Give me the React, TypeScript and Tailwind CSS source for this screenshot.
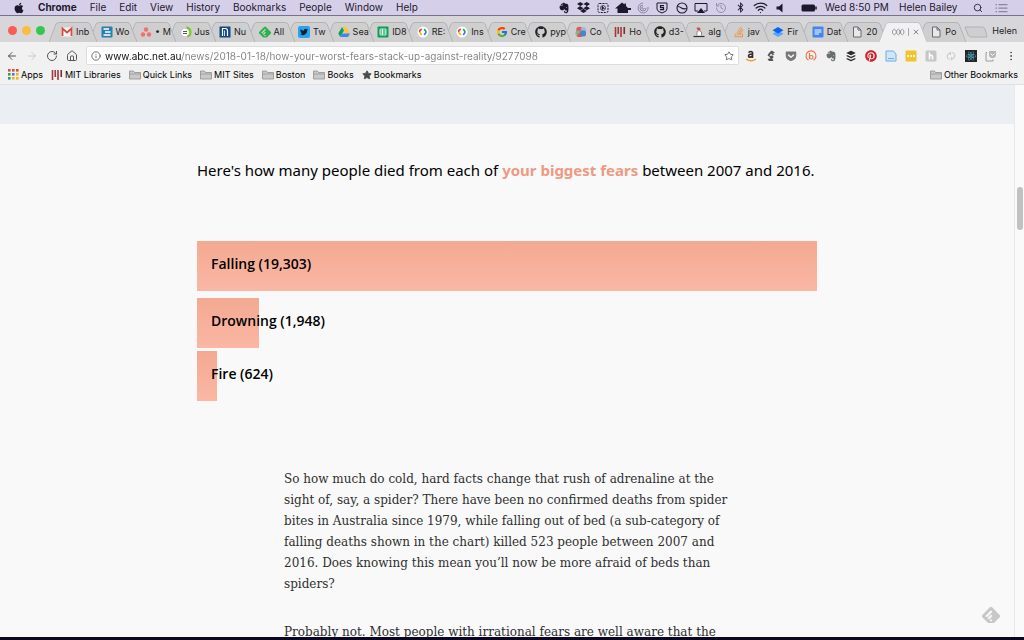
import type { ReactNode } from "react";
import {
  FaAmazon,
  FaApple,
  FaBluetoothB,
  FaBuffer,
  FaDropbox,
  FaEvernote,
  FaGetPocket,
  FaGithub,
  FaPinterest,
  FaReact,
  FaStackOverflow,
  FaTwitter,
} from "react-icons/fa";
import { FcGoogle } from "react-icons/fc";
import { SiFeedly } from "react-icons/si";
import { ArrowLeft, ArrowRight, EllipsisVertical, History, House, Info, RotateCw, Search, Star, Wifi, X } from "lucide-react";

const icon = "size-3 shrink-0";

function Gmail() {
  return (
    <svg viewBox="0 0 24 24" className={icon} aria-hidden="true">
      <rect x="1" y="3" width="22" height="18" rx="2" fill="#f5f5f5" />
      <path d="M3 20V5l9 8 9-8v15" fill="none" stroke="#d54b3d" strokeWidth="3.6" />
    </svg>
  );
}

function Sheet({ box, lines }: { box: string; lines: "grid" | "text" | "tree" }) {
  return (
    <svg viewBox="0 0 24 24" className={icon} aria-hidden="true">
      <rect x="1" y="1" width="22" height="22" rx="2" fill={box} />
      {lines === "grid" && <path d="M6 6h12v12H6zM6 10h12M6 14h12M11 6v12" fill="none" stroke="#fff" strokeWidth="1.6" />}
      {lines === "text" && <path d="M5 8h14M5 12h14M5 16h9" stroke="#fff" strokeWidth="2" />}
      {lines === "tree" && <path d="M5 6h11M8 12h11M5 18h14" stroke="#fff" strokeWidth="2.6" />}
    </svg>
  );
}

function Dots() {
  return (
    <svg viewBox="0 0 24 24" className={icon} aria-hidden="true">
      <g fill="#f2706b">
        <circle cx="12" cy="7" r="4.4" />
        <circle cx="6" cy="17" r="4.4" />
        <circle cx="18" cy="17" r="4.4" />
      </g>
    </svg>
  );
}

function GreenRing() {
  return (
    <svg viewBox="0 0 24 24" className={icon} aria-hidden="true">
      <circle cx="10" cy="13" r="8.5" fill="#fff" stroke="#aaa" strokeWidth="1" />
      <path d="M13 2.5a10 10 0 0 1 2 19" fill="none" stroke="#7ec51d" strokeWidth="4" />
      <path d="M6 11h8M6 15h8" stroke="#555" strokeWidth="2" />
    </svg>
  );
}

function BlueArch() {
  return (
    <svg viewBox="0 0 24 24" className={icon} aria-hidden="true">
      <rect x="1" y="1" width="22" height="22" rx="1" fill="#124a86" />
      <path d="M7 20V5h6q4 0 4 5v10" fill="none" stroke="#fff" strokeWidth="2.4" />
      <path d="M11 20V9" stroke="#fff" strokeWidth="1.6" />
    </svg>
  );
}

function Twitter() {
  return (
    <span className="grid size-3 shrink-0 place-items-center rounded-xs bg-[#2aa3ef]">
      <FaTwitter className="size-2 text-[#15222c]" />
    </span>
  );
}

function Drive() {
  return (
    <svg viewBox="0 0 24 24" className={icon} aria-hidden="true">
      <path d="M8 2h8l8 13h-8z" fill="#fbc72e" />
      <path d="M8 2l4 7L4.5 22 .5 15z" fill="#149e5b" />
      <path d="M8.5 15H24l-4 7H4.5z" fill="#4384f5" />
    </svg>
  );
}

function Developers() {
  return (
    <svg viewBox="0 0 24 24" className={icon} aria-hidden="true">
      <circle cx="12" cy="12" r="11" fill="#fff" />
      <g fill="none" strokeWidth="3.2">
        <path d="M9.5 6L5.5 9v3.500" stroke="#e1453a" />
        <path d="M5.5 12l4 6" stroke="#f2b719" />
        <path d="M14.5 6l4 6" stroke="#25a05a" />
        <path d="M18.5 12l-4 6" stroke="#3c78e4" />
      </g>
    </svg>
  );
}

function Blocks() {
  return (
    <svg viewBox="0 0 24 24" className={icon} aria-hidden="true">
      <circle cx="9" cy="8" r="6.5" fill="#de5b5b" />
      <circle cx="17" cy="8" r="5.5" fill="#a0b9d6" />
      <circle cx="7" cy="15" r="6" fill="#8fae8d" />
      <rect x="10" y="9" width="12" height="12" rx="4" fill="#4d84c6" />
      <path d="M8 13l6 9H4z" fill="#d9534f" />
    </svg>
  );
}

function Mit() {
  return (
    <svg viewBox="0 0 24 24" className={icon} aria-hidden="true">
      <path d="M3 2v20M8.5 2v14M14 2v20" stroke="#a2383b" strokeWidth="3.2" />
      <path d="M20.500 2v14" stroke="#7b2d31" strokeWidth="3.2" />
    </svg>
  );
}

function Sketch() {
  return (
    <svg viewBox="0 0 24 24" className={icon} aria-hidden="true">
      <path d="M7 3h6l3 5H9z" fill="#d24a45" />
      <path d="M8 19v-8l4-2 5 3v7" fill="#fff" stroke="#777" strokeWidth="1.6" />
      <path d="M1 21h22" stroke="#333" strokeWidth="2.4" />
    </svg>
  );
}

function Diamonds() {
  return (
    <svg viewBox="0 0 24 24" className={icon} aria-hidden="true">
      <path d="M12 9l11 6.5L12 22 1 15.5z" fill="#5aa4ff" />
      <path d="M12 2l11 6.5L12 15 1 8.5z" fill="#0c63ee" />
    </svg>
  );
}

function Page() {
  return (
    <svg viewBox="0 0 24 24" className={icon} aria-hidden="true">
      <path d="M5 2h9l6 6v14H5zM14 2v6h6" fill="#e9e9e9" stroke="#6a6a6a" strokeWidth="2" />
    </svg>
  );
}

function Abc() {
  return (
    <svg viewBox="0 0 36 24" className="h-3 w-3.5 shrink-0" aria-hidden="true">
      <g fill="none" stroke="#8a8a8a" strokeWidth="2">
        <path d="M12 7q-4-5-7 0t0 10 7 0l4-10q3-5 6 0t0 10-6 0L12 7" />
        <path d="M22 17l4-10q3-5 6 0t0 10-6 0l-4-10" />
      </g>
    </svg>
  );
}

type Tab = { icon: ReactNode; title: string; active?: boolean };

const tabs: Tab[] = [
  { icon: <Gmail />, title: "Inb" },
  { icon: <Sheet box="#2480b5" lines="tree" />, title: "Wo" },
  { icon: <Dots />, title: "• M" },
  { icon: <GreenRing />, title: "Jus" },
  { icon: <BlueArch />, title: "Nu" },
  { icon: <SiFeedly className="size-3 shrink-0 text-[#2bb24c]" />, title: "All" },
  { icon: <Twitter />, title: "Tw" },
  { icon: <Drive />, title: "Sea" },
  { icon: <Sheet box="#109d58" lines="grid" />, title: "ID8" },
  { icon: <Developers />, title: "RE:" },
  { icon: <Developers />, title: "Ins" },
  { icon: <FcGoogle className={icon} />, title: "Cre" },
  { icon: <FaGithub className={icon} />, title: "pyp" },
  { icon: <Blocks />, title: "Co" },
  { icon: <Mit />, title: "Ho" },
  { icon: <FaGithub className={icon} />, title: "d3-" },
  { icon: <Sketch />, title: "alg" },
  { icon: <FaStackOverflow className="size-3 shrink-0 text-[#ee9548]" />, title: "jav" },
  { icon: <Diamonds />, title: "Fir" },
  { icon: <Sheet box="#4384f4" lines="text" />, title: "Dat" },
  { icon: <Page />, title: "20" },
  { icon: <Abc />, title: "", active: true },
  { icon: <Page />, title: "Po" },
];

function TabItem({ tab, depth }: { tab: Tab; depth: number }) {
  return (
    <div className="relative h-5 min-w-0 flex-1" style={{ zIndex: depth }}>
      <svg
        viewBox="0 0 48 20"
        preserveAspectRatio="none"
        className="absolute inset-y-0 -left-1 h-5 w-12"
        aria-hidden="true"
      >
        <path
          d="M0 20L7 2Q8 .5 10 .5H38Q40 .5 41 2L48 20"
          fill={tab.active ? "#f1f1f1" : "#cfcfd0"}
          stroke={tab.active ? "#c4c4c4" : "#b4b4b5"}
        />
      </svg>
      <button type="button" className="relative flex h-5 w-full items-center gap-[3px] pl-2 text-left">
        {tab.icon}
        {tab.active ? (
          <>
            <span className="h-2 w-px shrink-0 bg-[#aaa]" />
            <X className="size-2 shrink-0 text-[#555]" />
          </>
        ) : (
          <span className="-mr-2 min-w-0 flex-1 whitespace-nowrap">{tab.title}</span>
        )}
      </button>
    </div>
  );
}

function Folder() {
  return (
    <svg viewBox="0 0 24 20" className="h-2.5 w-3 shrink-0" aria-hidden="true">
      <path d="M1 2h8l2 3h12v13H1z" fill="#c9c9c9" stroke="#8f8f8f" strokeWidth="1.6" />
      <path d="M1 8h22" stroke="#8f8f8f" strokeWidth="1.4" />
    </svg>
  );
}

function AppsGrid() {
  const colors = ["#e0493b", "#e0493b", "#e0493b", "#2f9e5c", "#3b7ded", "#f2b21c", "#2f9e5c", "#f2b21c", "#f2b21c"];
  return (
    <svg viewBox="0 0 11 11" className="size-[11px] shrink-0" aria-hidden="true">
      {colors.map((c, i) => (
        <rect key={i} x={(i % 3) * 4} y={Math.floor(i / 3) * 4} width="2.6" height="2.6" fill={c} />
      ))}
    </svg>
  );
}

const bookmarks = [
  { icon: <AppsGrid />, label: "Apps" },
  { icon: <Mit />, label: "MIT Libraries" },
  { icon: <Folder />, label: "Quick Links" },
  { icon: <Folder />, label: "MIT Sites" },
  { icon: <Folder />, label: "Boston" },
  { icon: <Folder />, label: "Books" },
  { icon: <Star className="size-2.5 shrink-0 fill-current text-[#4c4c4c]" />, label: "Bookmarks" },
];

const menus = ["File", "Edit", "View", "History", "Bookmarks", "People", "Window", "Help"];

const statusIcons: { label: string; node: ReactNode }[] = [
  { label: "Evernote", node: <FaEvernote className={icon} /> },
  { label: "Dropbox", node: <FaDropbox className="size-[13px] shrink-0" /> },
  {
    label: "Capture",
    node: (
      <svg viewBox="0 0 24 24" className={icon} fill="none" stroke="currentColor" strokeWidth="2">
        <rect x="2" y="3" width="20" height="18" rx="3" strokeDasharray="4 2" />
        <circle cx="12" cy="12" r="5" strokeWidth="1.4" />
        <path d="M10 8l5 5h-3l-2 3z" fill="currentColor" strokeWidth="1" />
      </svg>
    ),
  },
  {
    label: "Home",
    node: (
      <svg viewBox="0 0 32 24" className="h-3 w-4 shrink-0" fill="currentColor">
        <path d="M0 13L14 1l5 4V3h3v5l4 4h6v4h-6v6H5v-9z" />
      </svg>
    ),
  },
  {
    label: "Spiral",
    node: (
      <svg viewBox="0 0 24 24" className="size-3 shrink-0 opacity-40" fill="none" stroke="currentColor" strokeWidth="2">
        <path d="M22 10A10 10 0 1 1 12 2M18 12a6 6 0 1 1-6-6M14.5 12a2.5 2.5 0 1 1-2.500-2.500" />
      </svg>
    ),
  },
  {
    label: "Shield",
    node: (
      <svg viewBox="0 0 24 24" className={icon} fill="none" stroke="currentColor" strokeWidth="2">
        <path d="M2 2h20v12q0 5-10 8Q2 19 2 14z" />
        <path d="M16 7H9v4h6v4H8" strokeWidth="2.5" />
      </svg>
    ),
  },
  {
    label: "Wave",
    node: (
      <svg viewBox="0 0 24 24" className={icon} fill="none" stroke="currentColor" strokeWidth="2.2">
        <circle cx="12" cy="12" r="10" />
        <path d="M3 9q4 0 8 3t10 1" />
      </svg>
    ),
  },
  {
    label: "AirPlay",
    node: (
      <svg viewBox="0 0 28 24" className="h-3 w-3.5 shrink-0" fill="none" stroke="currentColor" strokeWidth="2">
        <path d="M8 18H2V3h24v15h-6" />
        <path d="M14 12l8 10H6z" fill="currentColor" stroke="none" />
      </svg>
    ),
  },
  { label: "Time Machine", node: <History className="size-3 shrink-0 opacity-35" /> },
  { label: "Bluetooth", node: <FaBluetoothB className="size-[11px] shrink-0" /> },
  { label: "Wi-Fi", node: <Wifi className="size-[15px] shrink-0" /> },
  {
    label: "Volume",
    node: (
      <svg viewBox="0 0 24 24" className={icon} fill="currentColor">
        <path d="M5 9h5l7-6v18l-7-6H5z" />
      </svg>
    ),
  },
];

const extensions: { label: string; node: ReactNode }[] = [
  {
    label: "Amazon",
    node: (
      <svg viewBox="0 0 24 24" className={icon} fill="none" aria-hidden="true">
        <path d="M7 5q5-4 8 0v11M15 8q-8 0-8 4 1 5 8 0" stroke="#332c28" strokeWidth="3.2" />
        <path d="M2 18q10 7 20 0" stroke="#f29b30" strokeWidth="2.8" />
      </svg>
    ),
  },
  {
    label: "Reader",
    node: (
      <svg viewBox="0 0 24 24" className={icon} fill="#555" aria-hidden="true">
        <path d="M8 6l5-5 7 4-4 2 3 2-4 1-3-3-4 6-3-2zM8 12l8-1 1 5-6 1zM5 18l9-2 3 6H8z" />
      </svg>
    ),
  },
  { label: "Pocket", node: <FaGetPocket className="size-3 text-[#777]" /> },
  {
    label: "Bitly",
    node: (
      <svg viewBox="0 0 24 24" className={icon} fill="none" stroke="#ef7440" strokeWidth="2.2" aria-hidden="true">
        <path d="M7 20.500a10 10 0 1 1 10 0" />
        <path d="M9 6v12" />
        <circle cx="12.500" cy="14.500" r="3.500" />
      </svg>
    ),
  },
  { label: "Evernote", node: <FaEvernote className="size-3 text-[#66716b]" /> },
  { label: "Buffer", node: <FaBuffer className="size-3 text-[#2c2c2c]" /> },
  { label: "Pinterest", node: <FaPinterest className="size-3 text-[#d2202c]" /> },
  {
    label: "Notes",
    node: (
      <svg viewBox="0 0 24 24" className={icon} aria-hidden="true">
        <path d="M2 2h15l5 6v14H2z" fill="#cfe6fa" stroke="#72ace0" strokeWidth="2" />
        <path d="M6 17h12" stroke="#72ace0" strokeWidth="2" />
      </svg>
    ),
  },
  {
    label: "Password",
    node: (
      <svg viewBox="0 0 24 24" className={icon} aria-hidden="true">
        <rect x="1" y="1" width="22" height="22" rx="2" fill="#f0c42d" />
        <g fill="#fff">
          <circle cx="6" cy="12" r="2" />
          <circle cx="12" cy="12" r="2" />
          <circle cx="18" cy="12" r="2" />
        </g>
      </svg>
    ),
  },
  {
    label: "Honey",
    node: (
      <svg viewBox="0 0 24 24" className={icon} aria-hidden="true">
        <rect x="1" y="1" width="22" height="22" rx="3" fill="#c6c6c6" />
        <path d="M9 5v14M9 12q6-3 6 1v6" fill="none" stroke="#fff" strokeWidth="3" />
      </svg>
    ),
  },
  {
    label: "Link",
    node: (
      <svg viewBox="0 0 24 24" className={icon} fill="none" stroke="#cdcdcd" strokeWidth="2.5" aria-hidden="true">
        <path d="M10 19a6 6 0 0 1-4-10l5-4v5M14 5a6 6 0 0 1 4 10l-5 4v-5" />
      </svg>
    ),
  },
  {
    label: "React",
    node: (
      <span className="grid size-3 place-items-center bg-[#20262b]">
        <FaReact className="size-2.5 text-[#58bcd8]" />
      </span>
    ),
  },
  {
    label: "Save",
    node: (
      <svg viewBox="0 0 24 24" className={icon} fill="none" stroke="#9b9b9b" strokeWidth="2" aria-hidden="true">
        <path d="M4 5H2v17h14v-3" />
        <path d="M8 2h14v7a7 7 0 0 1-14 0z" fill="#b5b5b5" stroke="none" />
        <path d="M11 7l4 4 4-4" stroke="#fff" />
      </svg>
    ),
  },
  { label: "Menu", node: <EllipsisVertical className="size-3 text-[#555]" /> },
];

const fears = [
  { label: "Falling (19,303)", share: 100, gap: "mb-[7px]" },
  { label: "Drowning (1,948)", share: 10, gap: "mb-[3px]" },
  { label: "Fire (624)", share: 3.2, gap: "" },
];

export default function App() {
  return (
    <div className="flex h-screen flex-col overflow-hidden border-b-3 border-[#0d0620] bg-[#f9f9f9] font-['Inter',sans-serif] text-[#222]">
      <header className="flex shrink-0 items-center border-b border-[#77728a] bg-[#d6cfea] text-[10px] leading-[15px] text-[#1d182c]">
        <nav aria-label="Menu bar" className="flex items-center gap-[13px] pl-[13px]">
          <FaApple className="size-3" aria-label="Apple" />
          <button type="button" className="font-bold">Chrome</button>
          {menus.map((m) => (
            <button type="button" key={m}>{m}</button>
          ))}
        </nav>
        <div className="ml-auto flex items-center">
          <div className="mr-[15px] flex w-[228px] items-center justify-between">
            {statusIcons.map((s) => (
              <span key={s.label} role="img" aria-label={s.label} className="flex w-3 justify-center">
                {s.node}
              </span>
            ))}
          </div>
          <svg viewBox="0 0 32 16" className="h-2 w-4" aria-label="Battery">
            <rect x="1" y="1" width="27" height="14" rx="3" fill="#1d182c" />
            <path d="M30 5v6" stroke="#1d182c" strokeWidth="3" />
          </svg>
          <span className="ml-2 w-[74px] whitespace-nowrap">Wed 8:50 PM</span>
          <span className="w-[74px] whitespace-nowrap">Helen Bailey</span>
          <Search className="size-2.5" />
          <svg viewBox="0 0 26 20" className="mr-4 ml-3 h-2.5 w-[13px] opacity-40" aria-hidden="true">
            <path d="M1 3h3M7 3h18M1 10h3M7 10h18M1 17h3M7 17h18" stroke="#1d182c" strokeWidth="2.5" />
          </svg>
        </div>
      </header>

      <div className="flex shrink-0 items-end bg-[#d7d7d9] pt-1.5 text-[9px] text-[#222]">
        <div className="flex gap-[5px] px-2 pb-[7px]">
          <span className="size-[9px] rounded-full bg-[#fb5b56]" />
          <span className="size-[9px] rounded-full bg-[#fcbc3f]" />
          <span className="size-[9px] rounded-full bg-[#34c84a]" />
        </div>
        <div className="isolate flex min-w-0 flex-1">
          {tabs.map((t, i) => (
            <TabItem key={i} tab={t} depth={t.active ? 40 : tabs.length - i} />
          ))}
        </div>
        <button type="button" aria-label="New tab" className="mb-1 ml-0.5 w-6">
          <svg viewBox="0 0 24 12" className="h-3 w-6" aria-hidden="true">
            <path d="M1 1h17q2 0 3 2l2 8H7q-2 0-3-2z" fill="#cfcfd0" stroke="#b2b2b3" />
          </svg>
        </button>
        <button type="button" className="mb-[5px] w-9 pr-[7px] text-right leading-3">Helen</button>
      </div>

      <div className="flex shrink-0 items-center bg-[#f1f1f1] pt-1 pr-[3px] pb-px text-[#555]">
        <div className="flex items-center gap-2 pr-2 pl-1.5">
          <button type="button" aria-label="Back"><ArrowLeft className="size-3" /></button>
          <button type="button" aria-label="Forward" className="text-[#ccc]"><ArrowRight className="size-3" /></button>
          <button type="button" aria-label="Reload"><RotateCw className="size-3" /></button>
          <button type="button" aria-label="Home"><House className="size-3" /></button>
        </div>
        <div className="flex h-[19px] min-w-0 flex-1 items-center gap-1 rounded-xs border border-[#ddd] bg-white px-1">
          <Info className="size-2.5 shrink-0" />
          <input
            type="text"
            aria-label="Address"
            defaultValue="www.abc.net.au/news/2018-01-18/how-your-worst-fears-stack-up-against-reality/9277098"
            className="min-w-0 flex-1 bg-[linear-gradient(90deg,#111_76px,#808080_76px)] bg-clip-text text-[10px] leading-4 text-transparent outline-none"
          />
          <button type="button" aria-label="Bookmark this page"><Star className="size-2.5" /></button>
        </div>
        <div className="ml-0.5 flex">
          {extensions.map((e) => (
            <button type="button" key={e.label} aria-label={e.label} className="flex w-5 justify-center">
              {e.node}
            </button>
          ))}
        </div>
      </div>

      <nav
        aria-label="Bookmarks"
        className="flex shrink-0 items-center gap-2 border-b border-[#dfe1e3] bg-[#f1f1f1] px-2 pb-px text-[9px] leading-[17px] text-black"
      >
        {bookmarks.map((b) => (
          <a href="#" key={b.label} className="flex items-center gap-0.5 whitespace-nowrap">
            {b.icon}
            {b.label}
          </a>
        ))}
        <a href="#" className="-mr-0.5 ml-auto flex items-center gap-0.5 whitespace-nowrap">
          <Folder />
          Other Bookmarks
        </a>
      </nav>

      <div className="flex min-h-0 flex-1">
        <main className="relative min-w-0 flex-1 overflow-hidden">
          <div className="h-[39px] bg-[#ebeff3]" />
          <section className="mx-auto max-w-[620px] pt-[34px] text-black">
            <h2 className="font-['Noto_Sans',sans-serif] text-[15px] leading-6 whitespace-nowrap">
              Here's how many people died from each of <strong className="text-[#ee9a82]">your biggest fears</strong> between 2007
              and 2016.
            </h2>
            <ul className="pt-[59px] font-['Open_Sans',sans-serif]">
              {fears.map((f) => (
                <li key={f.label} className={f.gap}>
                  <div
                    className="flex h-[50px] items-center bg-linear-to-b from-[#f4a991] to-[#fab7a5] pb-1 pl-3.5 text-sm font-semibold whitespace-nowrap"
                    style={{ width: `${f.share}%` }}
                  >
                    {f.label}
                  </div>
                </li>
              ))}
            </ul>
          </section>
          <article className="mx-auto max-w-[446px] pt-[68px] font-['DejaVu_Serif',serif] text-xs leading-[21px] whitespace-nowrap text-[#2f2f2f]">
            <p className="mb-[27px]">
              So how much do cold, hard facts change that rush of adrenaline at the
              <br />
              sight of, say, a spider? There have been no confirmed deaths from spider
              <br />
              bites in Australia since 1979, while falling out of bed (a sub-category of
              <br />
              falling deaths shown in the chart) killed 523 people between 2007 and
              <br />
              2016. Does knowing this mean you’ll now be more afraid of beds than
              <br />
              spiders?
            </p>
            <p>Probably not. Most people with irrational fears are well aware that the</p>
          </article>
          <SiFeedly className="absolute right-3.5 bottom-[13px] size-[18px] text-[#c8c8c8]" />
        </main>
        <div className="w-2.5 shrink-0 border-l border-[#e9e9e9] bg-[#fafafa] pt-[102px] pl-px">
          <div className="mx-auto h-[43px] w-1.5 rounded-full bg-[#c1c1c1]" />
        </div>
      </div>
    </div>
  );
}
